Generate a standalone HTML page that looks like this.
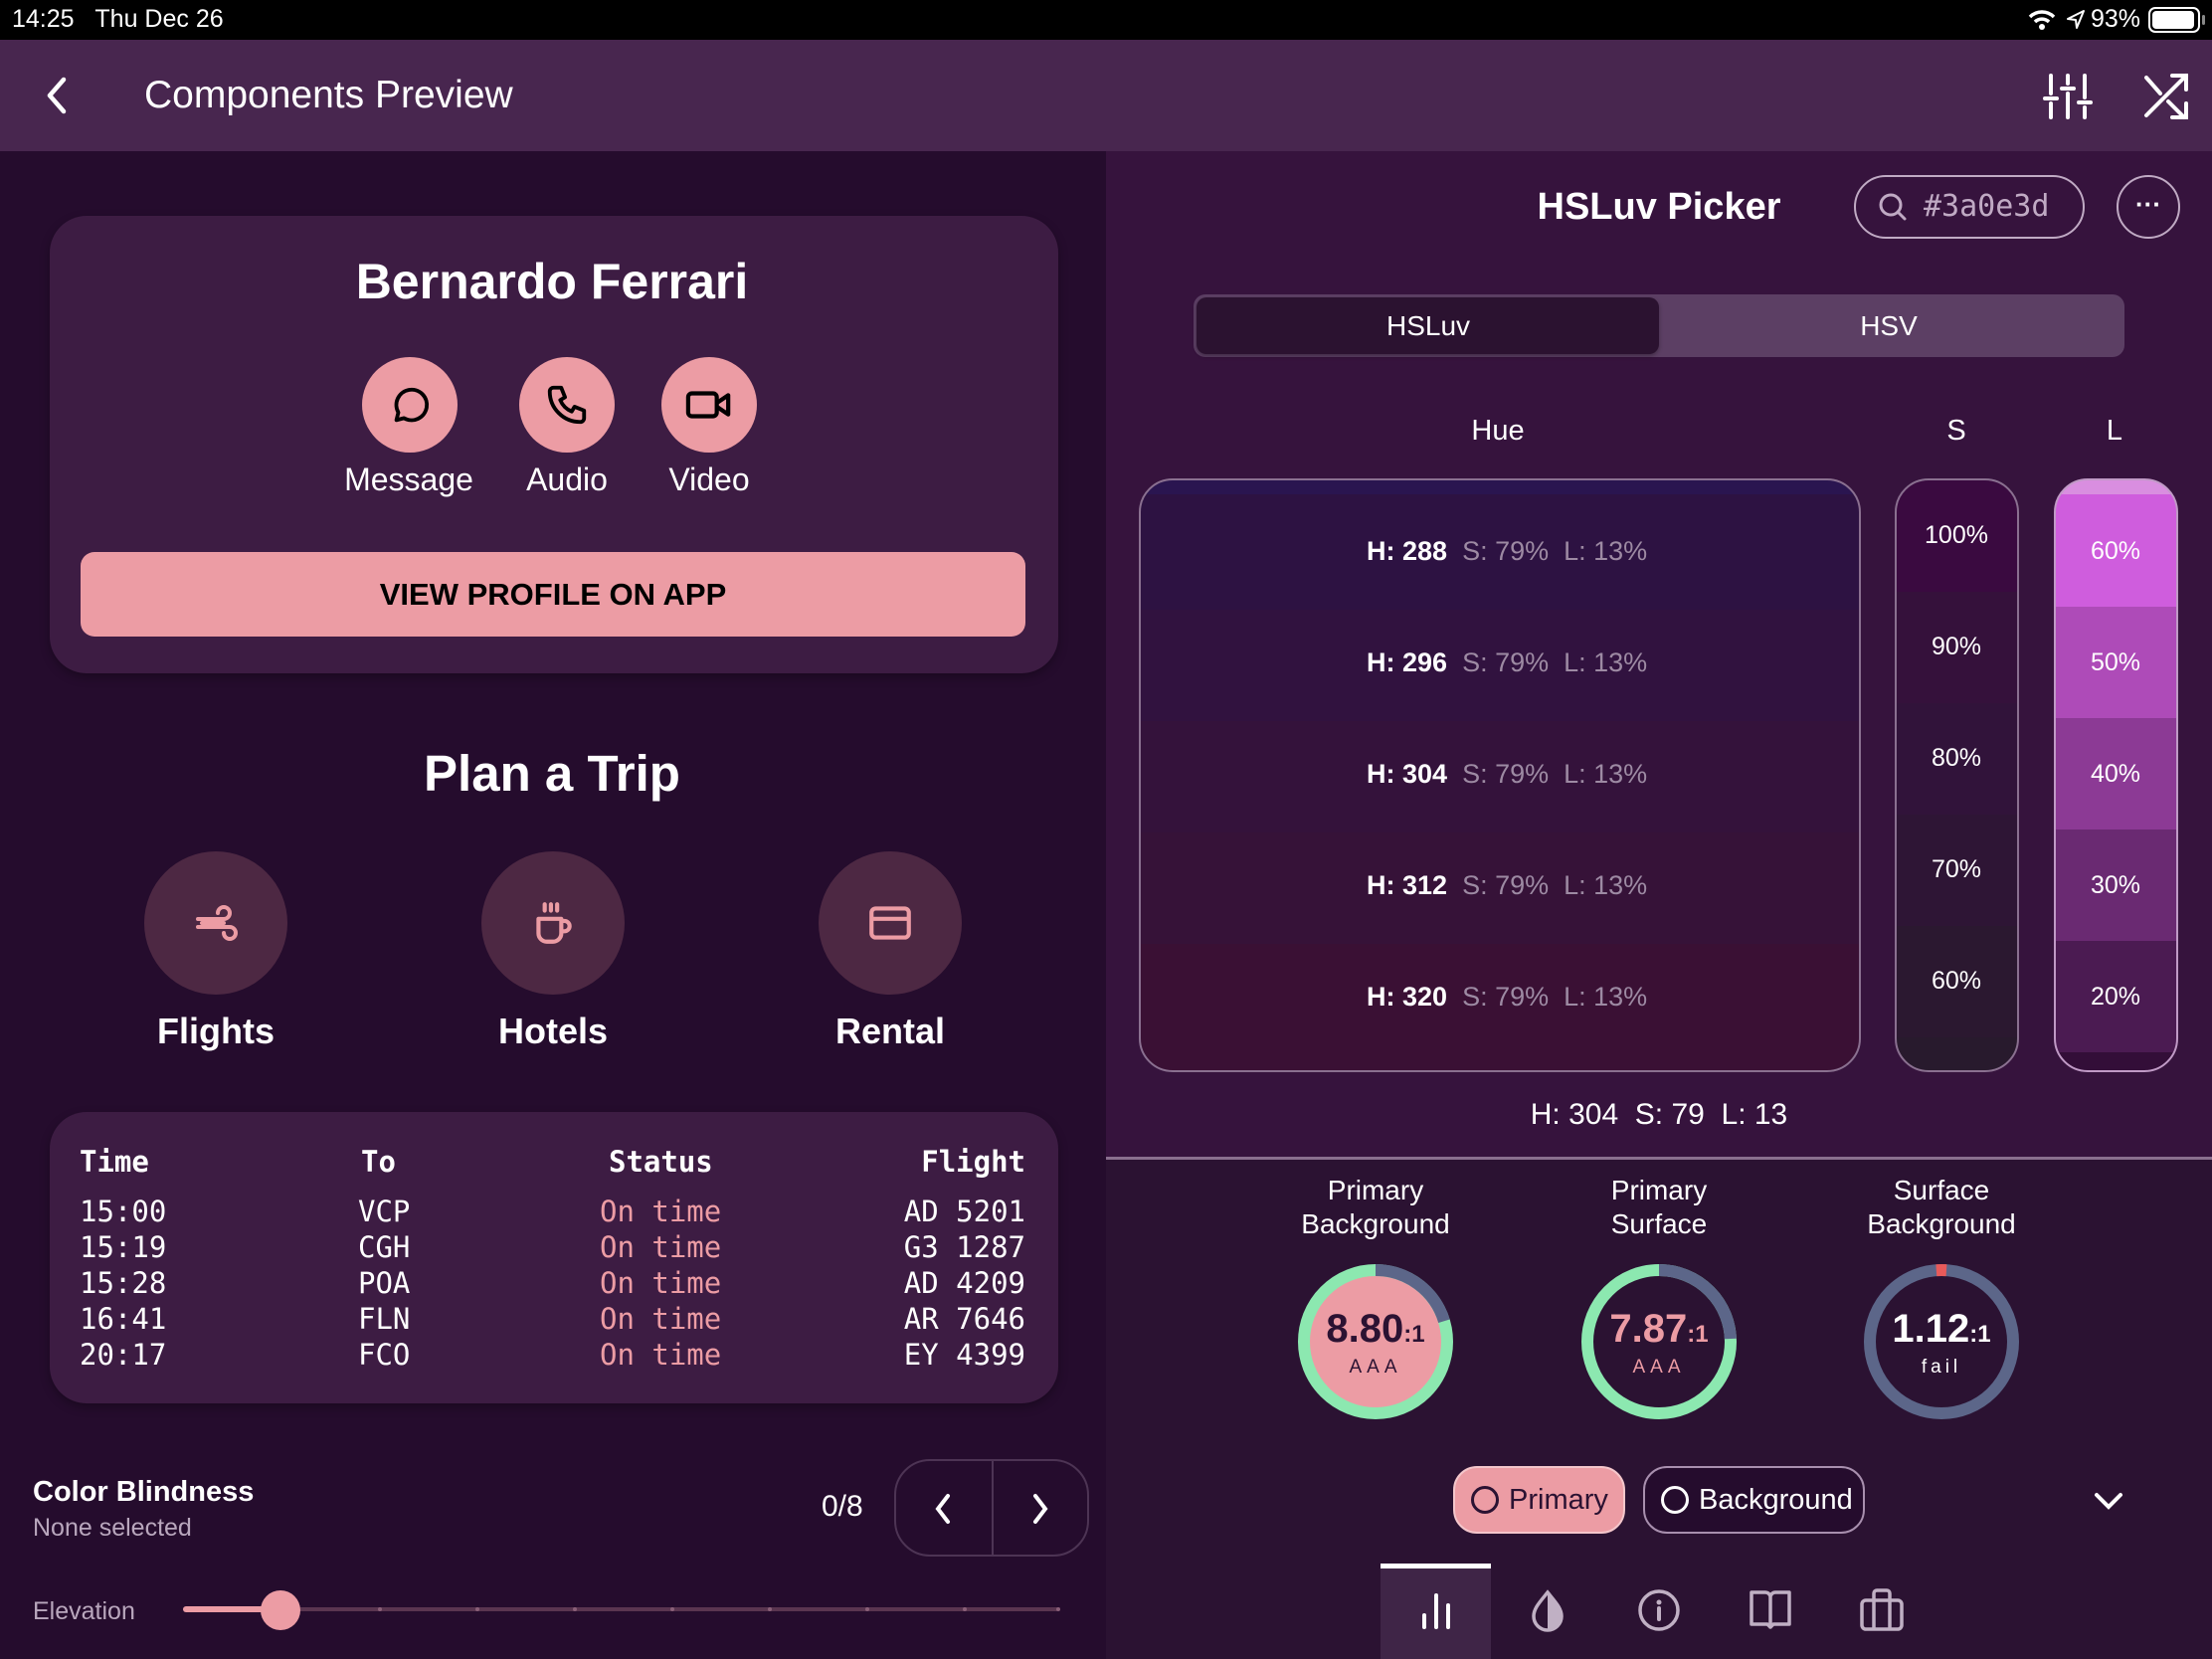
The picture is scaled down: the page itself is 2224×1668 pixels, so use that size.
<!DOCTYPE html>
<html><head><meta charset="utf-8"><style>
*{margin:0;padding:0;box-sizing:border-box}
body{width:2224px;height:1668px;overflow:hidden;background:#250c2d;font-family:"Liberation Sans",sans-serif;color:#fff;position:relative}
.a{position:absolute}
.c{transform:translateX(-50%);white-space:nowrap}
.mono{font-family:"DejaVu Sans Mono","Liberation Mono",monospace}
.circ{position:absolute;border-radius:50%;display:flex;align-items:center;justify-content:center}
</style></head><body>
<!-- status bar -->
<div class="a" style="left:0;top:0;width:2224px;height:40px;background:#000"></div>
<div class="a" style="left:12px;top:5px;font-size:25px">14:25&nbsp;&nbsp;&nbsp;Thu Dec 26</div>
<svg class="a" style="left:2038px;top:8px" width="30" height="24" viewBox="0 0 30 24"><path d="M3 9 A17 17 0 0 1 27 9 M8 14 A10 10 0 0 1 22 14" stroke="#fff" stroke-width="3.5" fill="none"/><circle cx="15" cy="19" r="3" fill="#fff"/></svg>
<svg class="a" style="left:2076px;top:9px" width="22" height="22" viewBox="0 0 22 22"><path d="M19 2 L3 10 L11 11 L12 19 Z" stroke="#fff" stroke-width="2" fill="none" stroke-linejoin="round"/></svg>
<div class="a" style="left:2102px;top:5px;font-size:25px">93%</div>
<div class="a" style="left:2160px;top:7px;width:52px;height:26px;border:2px solid #fff;border-radius:7px;padding:2px"><div style="width:42px;height:18px;background:#fff;border-radius:4px"></div></div>
<div class="a" style="left:2214px;top:15px;width:3px;height:10px;background:#888;border-radius:2px"></div>

<!-- app bar -->
<div class="a" style="left:0;top:40px;width:2224px;height:112px;background:#48264f"></div>
<svg class="a" style="left:42px;top:76px" width="30" height="40" viewBox="0 0 30 40"><path d="M22 4 L8 20 L22 36" stroke="#fff" stroke-width="4.5" fill="none" stroke-linecap="round" stroke-linejoin="round"/></svg>
<div class="a" style="left:145px;top:74px;font-size:39px">Components Preview</div>
<svg class="a" style="left:2054px;top:72px" width="50" height="50" viewBox="0 0 50 50" stroke="#fff" stroke-width="4" stroke-linecap="round"><path d="M8 4V22M8 32V46M25 4V12M25 22V46M42 4V26M42 36V46M2 27H14M19 17H31M36 31H48"/></svg>
<svg class="a" style="left:2152px;top:72px" width="50" height="50" viewBox="0 0 50 50" stroke="#fff" stroke-width="4" stroke-linecap="round" fill="none"><path d="M6 6L20 22M28 30L44 46M32 4H46V18M6 44L46 4M46 32V46H32"/></svg>

<!-- right panel -->
<div class="a" style="left:1112px;top:152px;width:1112px;height:1011px;background:#36133d"></div>
<div class="a" style="left:1112px;top:1163px;width:1112px;height:505px;background:#2b1232;border-top:3px solid #8a6f8e"></div>

<!-- card 1 -->
<div class="a" style="left:50px;top:217px;width:1014px;height:460px;background:#3d1c43;border-radius:37px;box-shadow:0 4px 10px rgba(0,0,0,.3)"></div>
<div class="a c" style="left:555px;top:254px;font-size:50px;font-weight:bold">Bernardo Ferrari</div>
<div class="circ" style="left:364px;top:359px;width:96px;height:96px;background:#ec9ca4"><svg width="46" height="46" viewBox="0 0 24 24" fill="none" stroke="#000" stroke-width="2" stroke-linejoin="round"><path d="M5 20 L6 16 A8 8 0 1 1 9 19 Z"/></svg></div>
<div class="circ" style="left:522px;top:359px;width:96px;height:96px;background:#ec9ca4"><svg width="46" height="46" viewBox="0 0 24 24" fill="none" stroke="#000" stroke-width="2" stroke-linejoin="round"><path d="M5 3h4l2 5-2.5 1.5a11 11 0 0 0 6 6L16 13l5 2v4a2 2 0 0 1-2 2A16 16 0 0 1 3 5a2 2 0 0 1 2-2z"/></svg></div>
<div class="circ" style="left:665px;top:359px;width:96px;height:96px;background:#ec9ca4"><svg width="50" height="46" viewBox="0 0 26 24" fill="none" stroke="#000" stroke-width="2.2" stroke-linejoin="round"><rect x="2" y="6" width="15" height="12" rx="2"/><path d="M17 11 L23 7 V17 L17 13"/></svg></div>
<div class="a c" style="left:411px;top:464px;font-size:32px">Message</div>
<div class="a c" style="left:570px;top:464px;font-size:32px">Audio</div>
<div class="a c" style="left:713px;top:464px;font-size:32px">Video</div>
<div class="a" style="left:81px;top:555px;width:950px;height:85px;background:#ec9ca4;border-radius:14px;color:#000;font-size:31px;font-weight:bold;display:flex;align-items:center;justify-content:center">VIEW PROFILE ON APP</div>

<!-- plan a trip -->
<div class="a c" style="left:555px;top:748px;font-size:51px;font-weight:bold">Plan a Trip</div>
<div class="circ" style="left:145px;top:856px;width:144px;height:144px;background:#4d2843"><svg width="48" height="48" viewBox="0 0 24 24" fill="none" stroke="#ec9ca4" stroke-width="2" stroke-linecap="round"><path d="M3 10h13a3 3 0 1 0-3-3M3 14h16a3 3 0 1 1-3 3M5 12h11"/></svg></div>
<div class="circ" style="left:484px;top:856px;width:144px;height:144px;background:#4d2843"><svg width="50" height="50" viewBox="0 0 24 24" fill="none" stroke="#ec9ca4" stroke-width="2" stroke-linecap="round" stroke-linejoin="round"><path d="M5 10h11v7a4 4 0 0 1-4 4H9a4 4 0 0 1-4-4zM16 11h1.5a2.5 2.5 0 0 1 0 5H16M8 3v3M11 3v3M14 3v3"/></svg></div>
<div class="circ" style="left:823px;top:856px;width:144px;height:144px;background:#4d2843"><svg width="50" height="50" viewBox="0 0 24 24" fill="none" stroke="#ec9ca4" stroke-width="2"><rect x="3" y="5" width="18" height="14" rx="2"/><path d="M3 10h18"/></svg></div>
<div class="a c" style="left:217px;top:1016px;font-size:36px;font-weight:bold">Flights</div>
<div class="a c" style="left:556px;top:1016px;font-size:36px;font-weight:bold">Hotels</div>
<div class="a c" style="left:895px;top:1016px;font-size:36px;font-weight:bold">Rental</div>

<!-- table -->
<div class="a" style="left:50px;top:1118px;width:1014px;height:293px;background:#3d1c43;border-radius:37px;box-shadow:0 4px 10px rgba(0,0,0,.3)"></div>
<div class="a mono" style="left:80px;top:1150px;font-size:29px;line-height:36px;font-weight:bold">Time</div>
<div class="a mono" style="left:363px;top:1150px;font-size:29px;line-height:36px;font-weight:bold">To</div>
<div class="a mono" style="left:612px;top:1150px;font-size:29px;line-height:36px;font-weight:bold">Status</div>
<div class="a mono" style="right:1193px;top:1150px;font-size:29px;line-height:36px;font-weight:bold;text-align:right">Flight</div>
<div class="a mono" style="left:80px;top:1200px;font-size:29px;line-height:36px">15:00<br>15:19<br>15:28<br>16:41<br>20:17</div>
<div class="a mono" style="left:360px;top:1200px;font-size:29px;line-height:36px">VCP<br>CGH<br>POA<br>FLN<br>FCO</div>
<div class="a mono" style="left:603px;top:1200px;font-size:29px;line-height:36px;color:#ec9ca4">On time<br>On time<br>On time<br>On time<br>On time</div>
<div class="a mono" style="right:1193px;top:1200px;font-size:29px;line-height:36px;text-align:right">AD 5201<br>G3 1287<br>AD 4209<br>AR 7646<br>EY 4399</div>

<!-- color blindness -->
<div class="a" style="left:33px;top:1484px;font-size:29px;font-weight:bold">Color Blindness</div>
<div class="a" style="left:33px;top:1522px;font-size:25px;color:#b9a7bd">None selected</div>
<div class="a" style="left:826px;top:1498px;font-size:30px">0/8</div>
<div class="a" style="left:899px;top:1467px;width:196px;height:98px;border:2px solid #4d3454;border-radius:36px"></div>
<div class="a" style="left:997px;top:1467px;width:2px;height:98px;background:#4d3454"></div>
<svg class="a" style="left:935px;top:1500px" width="26" height="34" viewBox="0 0 26 34"><path d="M18 4 L8 17 L18 30" stroke="#fff" stroke-width="4" fill="none" stroke-linecap="round"/></svg>
<svg class="a" style="left:1033px;top:1500px" width="26" height="34" viewBox="0 0 26 34"><path d="M8 4 L18 17 L8 30" stroke="#fff" stroke-width="4" fill="none" stroke-linecap="round"/></svg>
<div class="a" style="left:33px;top:1606px;font-size:25px;color:#b9a7bd">Elevation</div>
<div class="a" style="left:184px;top:1616px;width:880px;height:4px;background:#5a3550;border-radius:2px"></div>
<div class="a" style="left:184px;top:1615px;width:100px;height:6px;background:#ec9ca4;border-radius:3px"></div>
<div class="a" style="left:380px;top:1616px;width:4px;height:4px;background:#8a5f78;border-radius:2px;box-shadow:98px 0 #8a5f78,196px 0 #8a5f78,294px 0 #8a5f78,392px 0 #8a5f78,490px 0 #8a5f78,588px 0 #8a5f78,682px 0 #8a5f78"></div>
<div class="a" style="left:262px;top:1599px;width:40px;height:40px;background:#ec9ca4;border-radius:50%"></div>

<!-- right header -->
<div class="a c" style="left:1668px;top:187px;font-size:38px;font-weight:bold">HSLuv Picker</div>
<div class="a" style="left:1864px;top:176px;width:232px;height:64px;border:2px solid #c0aac4;border-radius:32px"></div>
<svg class="a" style="left:1888px;top:193px" width="30" height="30" viewBox="0 0 30 30"><circle cx="13" cy="13" r="10" stroke="#c0aac4" stroke-width="3" fill="none"/><path d="M20 20L27 27" stroke="#c0aac4" stroke-width="3" stroke-linecap="round"/></svg>
<div class="a mono" style="left:1934px;top:190px;font-size:30px;color:#c0aac4">#3a0e3d</div>
<div class="a" style="left:2128px;top:176px;width:64px;height:64px;border:2px solid #c0aac4;border-radius:50%;text-align:center;font-size:26px;line-height:54px;font-weight:bold">···</div>

<div class="a" style="left:1200px;top:296px;width:936px;height:63px;background:#5c3f64;border-radius:12px"></div>
<div class="a" style="left:1203px;top:299px;width:465px;height:57px;background:#2b1230;border-radius:10px;box-shadow:0 2px 4px rgba(0,0,0,.3)"></div>
<div class="a c" style="left:1436px;top:312px;font-size:28px">HSLuv</div>
<div class="a c" style="left:1899px;top:312px;font-size:28px">HSV</div>

<div class="a c" style="left:1506px;top:417px;font-size:29px">Hue</div>
<div class="a c" style="left:1967px;top:417px;font-size:29px">S</div>
<div class="a c" style="left:2126px;top:417px;font-size:29px">L</div>

<!-- hue box -->
<div class="a" style="left:1145px;top:481px;width:726px;height:597px;border:2px solid #8a7090;border-radius:34px;overflow:hidden;background:linear-gradient(#2a1550 0,#2a1550 14px,#2d1242 14px,#2d1242 130px,#31123f 130px,#31123f 242px,#34123b 242px,#34123b 354px,#361238 354px,#361238 466px,#3a1034 466px)"></div>
<div class="a" style="left:1374px;top:498px;font-size:27px;line-height:112px;white-space:pre"><b>H: 288</b>  <span style="color:#9d8aa3">S: 79%  L: 13%</span><br><b>H: 296</b>  <span style="color:#9d8aa3">S: 79%  L: 13%</span><br><b>H: 304</b>  <span style="color:#9d8aa3">S: 79%  L: 13%</span><br><b>H: 312</b>  <span style="color:#9d8aa3">S: 79%  L: 13%</span><br><b>H: 320</b>  <span style="color:#9d8aa3">S: 79%  L: 13%</span></div>

<!-- S box -->
<div class="a" style="left:1905px;top:481px;width:125px;height:597px;border:2px solid #8a7090;border-radius:34px;overflow:hidden;background:linear-gradient(#3a0a40 0,#3a0a40 112px,#35113b 112px,#35113b 224px,#31133a 224px,#31133a 336px,#2e1535 336px,#2e1535 448px,#2b1830 448px,#2b1830 560px,#281a2d 560px)"></div>
<div class="a c" style="left:1967px;top:482px;font-size:25px;line-height:112px;text-align:center">100%<br>90%<br>80%<br>70%<br>60%</div>
<!-- L box -->
<div class="a" style="left:2065px;top:481px;width:125px;height:597px;border:2px solid #c09ac6;border-radius:34px;overflow:hidden;background:linear-gradient(#d98ee0 0,#d98ee0 14px,#cf5ddd 14px,#cf5ddd 127px,#ae4bb8 127px,#ae4bb8 239px,#8c3a95 239px,#8c3a95 351px,#6a2a72 351px,#6a2a72 463px,#4b1b52 463px,#4b1b52 575px,#330e38 575px)"></div>
<div class="a c" style="left:2127px;top:498px;font-size:25px;line-height:112px;text-align:center">60%<br>50%<br>40%<br>30%<br>20%</div>

<div class="a c" style="left:1668px;top:1104px;font-size:30px;white-space:pre">H: 304  S: 79  L: 13</div>

<!-- contrast -->
<div class="a c" style="left:1383px;top:1180px;font-size:28px;line-height:34px;text-align:center">Primary<br>Background</div>
<div class="a c" style="left:1668px;top:1180px;font-size:28px;line-height:34px;text-align:center">Primary<br>Surface</div>
<div class="a c" style="left:1952px;top:1180px;font-size:28px;line-height:34px;text-align:center">Surface<br>Background</div>

<svg class="a" style="left:1303px;top:1269px" width="160" height="160" viewBox="0 0 160 160"><circle cx="80" cy="80" r="67" fill="#ec9ca4"/><g transform="rotate(-90 80 80)" fill="none" stroke-width="12"><circle cx="80" cy="80" r="72" stroke="#8ce8b0"/><circle cx="80" cy="80" r="72" stroke="#5c6689" stroke-dasharray="92 400"/></g></svg>
<div class="a c" style="left:1383px;top:1314px;font-size:40px;font-weight:bold;color:#2b1232">8.80<span style="font-size:24px">:1</span></div>
<div class="a c" style="left:1383px;top:1364px;font-size:19px;letter-spacing:5px;color:#2b1232">AAA</div>

<svg class="a" style="left:1588px;top:1269px" width="160" height="160" viewBox="0 0 160 160"><g transform="rotate(-90 80 80)" fill="none" stroke-width="12"><circle cx="80" cy="80" r="72" stroke="#8ce8b0"/><circle cx="80" cy="80" r="72" stroke="#5c6689" stroke-dasharray="110 400"/></g></svg>
<div class="a c" style="left:1668px;top:1314px;font-size:40px;font-weight:bold;color:#ec9ca4">7.87<span style="font-size:24px">:1</span></div>
<div class="a c" style="left:1668px;top:1364px;font-size:19px;letter-spacing:5px;color:#ec9ca4">AAA</div>

<svg class="a" style="left:1872px;top:1269px" width="160" height="160" viewBox="0 0 160 160"><g transform="rotate(-90 80 80)" fill="none" stroke-width="12"><circle cx="80" cy="80" r="72" stroke="#5c6689"/><circle cx="80" cy="80" r="72" stroke="#e85a5a" stroke-dasharray="10 442" stroke-dashoffset="5"/></g></svg>
<div class="a c" style="left:1952px;top:1314px;font-size:40px;font-weight:bold">1.12<span style="font-size:24px">:1</span></div>
<div class="a c" style="left:1952px;top:1364px;font-size:19px;letter-spacing:4px">fail</div>

<!-- chips -->
<div class="a" style="left:1461px;top:1474px;width:173px;height:68px;background:#ec9ca4;border:2px solid #f4c6cb;border-radius:24px;color:#2b1232;font-size:29px;display:flex;align-items:center;padding-left:16px"><span style="display:inline-block;width:28px;height:28px;border:3px solid #2b1232;border-radius:50%;margin-right:10px"></span>Primary</div>
<div class="a" style="left:1652px;top:1474px;width:223px;height:68px;background:#250c2d;border:2px solid #a88fae;border-radius:24px;font-size:29px;display:flex;align-items:center;padding-left:16px"><span style="display:inline-block;width:28px;height:28px;border:3px solid #fff;border-radius:50%;margin-right:10px"></span>Background</div>
<svg class="a" style="left:2104px;top:1498px" width="32" height="22" viewBox="0 0 32 22"><path d="M4 5 L16 17 L28 5" stroke="#fff" stroke-width="4" fill="none" stroke-linecap="round"/></svg>

<!-- bottom nav -->
<div class="a" style="left:1388px;top:1572px;width:111px;height:96px;background:#3f2547;border-top:5px solid #fff"></div>
<svg class="a" style="left:1424px;top:1598px" width="40" height="42" viewBox="0 0 40 42" stroke="#fff" stroke-width="4" stroke-linecap="round"><path d="M8 26V38M20 6V38M32 16V38"/></svg>
<svg class="a" style="left:1536px;top:1597px" width="40" height="44" viewBox="0 0 40 44"><path d="M20 4 C28 14 34 20 34 28 A14 14 0 0 1 6 28 C6 20 12 14 20 4Z" stroke="#c0b0c4" stroke-width="3.5" fill="none"/><path d="M20 4 C28 14 34 20 34 28 A14 14 0 0 1 20 42Z" fill="#c0b0c4"/></svg>
<svg class="a" style="left:1646px;top:1597px" width="44" height="44" viewBox="0 0 44 44"><circle cx="22" cy="22" r="19" stroke="#c0b0c4" stroke-width="3.5" fill="none"/><circle cx="22" cy="14" r="2.5" fill="#c0b0c4"/><path d="M22 20V31" stroke="#c0b0c4" stroke-width="4" stroke-linecap="round"/></svg>
<svg class="a" style="left:1758px;top:1598px" width="44" height="44" viewBox="0 0 44 44" fill="none" stroke="#c0b0c4" stroke-width="3.5" stroke-linejoin="round"><path d="M3 3H17A5 5 0 0 1 22 8V38L19 35H3Z M41 3H27A5 5 0 0 0 22 8V38L25 35H41Z"/></svg>
<svg class="a" style="left:1870px;top:1597px" width="44" height="44" viewBox="0 0 44 44" fill="none" stroke="#c0b0c4" stroke-width="3.5"><rect x="2" y="12" width="40" height="29" rx="4"/><path d="M14 12V5A3 3 0 0 1 17 2H27A3 3 0 0 1 30 5V12M14 12V41M30 12V41"/></svg>
</body></html>
